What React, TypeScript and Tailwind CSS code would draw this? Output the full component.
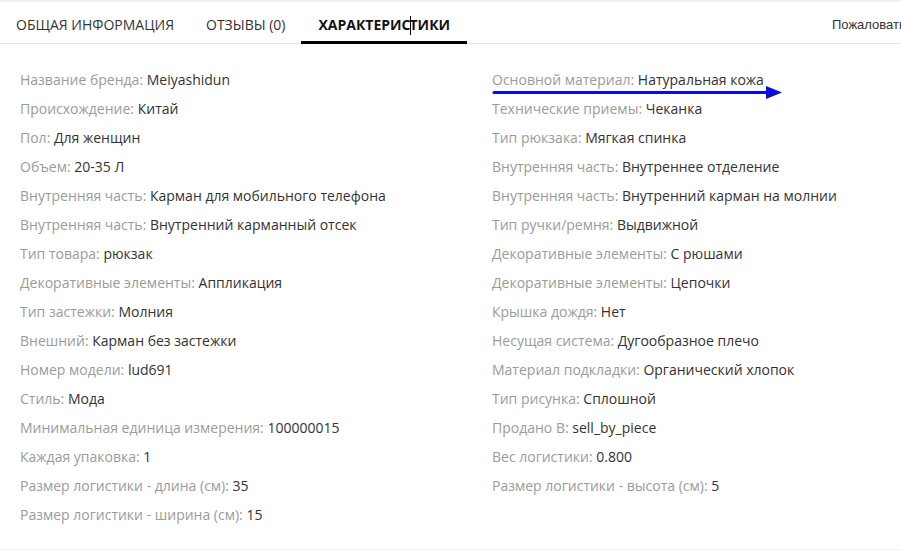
import React from "react";

const left: [string, string][] = [
  ["Название бренда", "Meiyashidun"],
  ["Происхождение", "Китай"],
  ["Пол", "Для женщин"],
  ["Объем", "20-35 Л"],
  ["Внутренняя часть", "Карман для мобильного телефона"],
  ["Внутренняя часть", "Внутренний карманный отсек"],
  ["Тип товара", "рюкзак"],
  ["Декоративные элементы", "Аппликация"],
  ["Тип застежки", "Молния"],
  ["Внешний", "Карман без застежки"],
  ["Номер модели", "lud691"],
  ["Стиль", "Мода"],
  ["Минимальная единица измерения", "100000015"],
  ["Каждая упаковка", "1"],
  ["Размер логистики - длина (см)", "35"],
  ["Размер логистики - ширина (см)", "15"],
];

const right: [string, string][] = [
  ["Основной материал", "Натуральная кожа"],
  ["Технические приемы", "Чеканка"],
  ["Тип рюкзака", "Мягкая спинка"],
  ["Внутренняя часть", "Внутреннее отделение"],
  ["Внутренняя часть", "Внутренний карман на молнии"],
  ["Тип ручки/ремня", "Выдвижной"],
  ["Декоративные элементы", "С рюшами"],
  ["Декоративные элементы", "Цепочки"],
  ["Крышка дождя", "Нет"],
  ["Несущая система", "Дугообразное плечо"],
  ["Материал подкладки", "Органический хлопок"],
  ["Тип рисунка", "Сплошной"],
  ["Продано В", "sell_by_piece"],
  ["Вес логистики", "0.800"],
  ["Размер логистики - высота (см)", "5"],
];

function Spec({ label, value }: { label: string; value: string }) {
  return (
    <li className="whitespace-nowrap">
      <span className="text-[#9b9b9b]">{label}: </span>
      <span className="text-[#333]">{value}</span>
    </li>
  );
}

export default function App() {
  return (
    <div className="relative w-[901px] h-[550px] overflow-hidden bg-white font-['Open_Sans',sans-serif]">
      <div className="h-[2px] bg-[#f2f2f2]" />
      <div className="flex items-stretch h-[42px] border-b border-[#e3e3e3] text-[14px]">
        <button className="px-4 pt-[4px] uppercase text-[#333]">Общая информация</button>
        <button className="px-4 pt-[4px] uppercase text-[#333]">Отзывы (0)</button>
        <button className="px-[17px] pt-[6px] uppercase font-bold text-[#111] border-b-[3px] border-black -mb-px">
          Характерис
          <span className="inline-block w-px h-[19px] bg-black align-middle -mx-px" />
          тики
        </button>
        <div className="ml-auto w-[69px] shrink-0 overflow-hidden whitespace-nowrap self-center pt-[4px] text-[13px] text-[#333] font-['Liberation_Sans',sans-serif]">
          Пожаловаться
        </div>
      </div>

      <div className="grid grid-cols-[472px_1fr] pl-5 pt-[21px] pb-5 border-b border-[#eeeeee] text-[14px] leading-[29px]">
        <ul>
          {left.map(([l, v], i) => (
            <Spec key={i} label={l} value={v} />
          ))}
        </ul>
        <ul>
          {right.map(([l, v], i) => (
            <Spec key={i} label={l} value={v} />
          ))}
        </ul>
      </div>

      <svg className="absolute left-[492px] top-[84px]" width="294" height="18" viewBox="0 0 294 18">
        <line x1="2" y1="8.5" x2="276" y2="8.5" stroke="#0b0bdc" strokeWidth="3" strokeLinecap="round" />
        <polygon points="274,2 290,8.5 274,15" fill="#0b0bdc" />
      </svg>
    </div>
  );
}
